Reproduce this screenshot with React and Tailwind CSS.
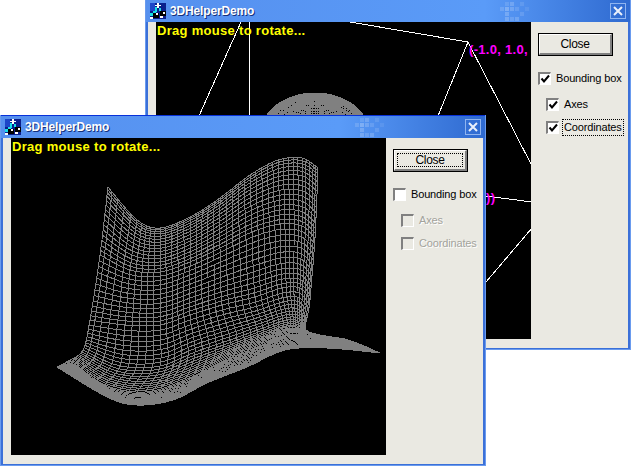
import React from 'react'

const FONT = "font-['Liberation_Sans',Arial,sans-serif]"

// key curves of the surface, top row to the front edge
const KEYS = [
  [[108,187],[137,220],[160,228],[190,217],[220,198],[250,175],[278,160],[302,158],[318,168]],
  [[100,255],[130,270],[160,272],[190,262],[220,248],[252,232],[280,224],[302,226],[315,238]],
  [[90,320],[125,325],[160,325],[190,315],[222,305],[255,297],[282,288],[300,288],[310,300]],
  [[83,350],[120,366],[160,366],[195,352],[230,340],[263,328],[287,320],[300,322],[308,334]],
  [[70,360],[105,385],[145,392],[185,380],[225,360],[262,345],[285,335],[307,335],[345,339]],
  [[57,367],[107,397],[137,405],[173,400],[207,383],[247,367],[285,350],[327,348],[380,353]],
]
const ROWS_PER_KEY = [15, 12, 9, 10, 14]
const COLS = 40

function spline(pts, t) {
  const n = pts.length - 1
  const i = Math.min(Math.floor(t), n - 1)
  const f = t - i
  const p0 = pts[Math.max(i - 1, 0)]
  const p1 = pts[i]
  const p2 = pts[i + 1]
  const p3 = pts[Math.min(i + 2, n)]
  return [0, 1].map((k) =>
    0.5 * (2 * p1[k] + (p2[k] - p0[k]) * f +
      (2 * p0[k] - 5 * p1[k] + 4 * p2[k] - p3[k]) * f * f +
      (3 * p1[k] - p0[k] - 3 * p2[k] + p3[k]) * f * f * f)
  )
}

function surfacePoint(s, t) {
  return spline(KEYS.map((curve) => spline(curve, s)), t)
}

function toPoints(list) {
  return list.map((p) => `${p[0].toFixed(1)},${p[1].toFixed(1)}`).join(' ')
}

function buildSurface() {
  const rowValues = []
  ROWS_PER_KEY.forEach((count, k) => {
    for (let i = 0; i < count; i++) rowValues.push(k + i / count)
  })
  rowValues.push(KEYS.length - 1)
  const lines = []
  rowValues.forEach((t) => {
    const row = []
    for (let c = 0; c <= COLS; c++) row.push(surfacePoint((c / COLS) * 8, t))
    lines.push(toPoints(row))
  })
  for (let c = 0; c <= COLS; c++) {
    const col = []
    rowValues.forEach((t) => col.push(surfacePoint((c / COLS) * 8, t)))
    lines.push(toPoints(col))
  }
  return lines
}

function buildDome() {
  const lines = []
  const cx = 315
  const cy = 135
  for (let i = 1; i < 66; i++) {
    const a = (i / 66) * Math.PI
    const row = []
    const col = []
    for (let j = 0; j <= 40; j++) {
      const b = (j / 40) * Math.PI
      row.push([cx + 55 * Math.sin(a) * Math.cos(b), cy - 42 * Math.cos(a) * (0.5 + 0.5 * Math.sin(b))])
      col.push([cx + 55 * Math.cos(a) * Math.sin(b), cy - 42 * Math.cos(b)])
    }
    lines.push(toPoints(row), toPoints(col))
  }
  return lines
}

const SURFACE = buildSurface()
const DOME = buildDome()

const BOX_LINES = [
  '350,22 468,42',
  '468,42 438,116',
  '468,42 532,166',
  '241,22 199,116',
  '249,22 249,116',
  '486,196 532,202',
  '532,228 486,282',
]

function AppIcon() {
  return (
    <svg width="16" height="16" viewBox="0 0 16 16" shapeRendering="crispEdges" className="shrink-0">
      <rect width="16" height="16" fill="#0a1f8c" />
      <rect x="0" y="0" width="5" height="8" fill="#1d46c8" />
      <rect x="7" y="0" width="2" height="5" fill="#ffffff" />
      <rect x="5" y="2" width="6" height="1" fill="#ffffff" />
      <rect x="5" y="4" width="2" height="5" fill="#19e0e8" />
      <rect x="9" y="5" width="2" height="3" fill="#19e0e8" />
      <rect x="0" y="10" width="3" height="3" fill="#19e0e8" />
      <rect x="3" y="8" width="3" height="2" fill="#19e0e8" />
      <rect x="3" y="10" width="6" height="5" fill="#000000" />
      <rect x="10" y="8" width="6" height="5" fill="#000000" />
      <rect x="6" y="10" width="2" height="2" fill="#ffffff" />
      <rect x="13" y="9" width="2" height="2" fill="#ffffff" />
      <rect x="10" y="13" width="3" height="2" fill="#ffffff" />
      <rect x="0" y="14" width="3" height="2" fill="#ffffff" />
    </svg>
  )
}

const CHECKER = [
  [5, 2, 0.12], [10, 2, 0.18], [20, 2, 0.1],
  [0, 7, 0.14], [5, 7, 0.25], [10, 7, 0.18], [15, 7, 0.12], [25, 7, 0.08],
  [5, 12, 0.2], [20, 12, 0.12],
  [5, 17, 0.2], [10, 17, 0.14], [15, 17, 0.18],
]

function Checker() {
  return (
    <svg width="30" height="22" viewBox="0 0 30 22" shapeRendering="crispEdges" className="shrink-0">
      {CHECKER.map(([x, y, o]) => (
        <rect key={`${x}-${y}`} x={x} y={y} width="4" height="4" fill="#ffffff" opacity={o} />
      ))}
    </svg>
  )
}

function CloseIcon() {
  return (
    <div className="w-4 h-4 shrink-0 border border-[#8fb4f0] flex items-center justify-center">
      <svg width="10" height="10" viewBox="0 0 10 10">
        <path d="M1 1 L9 9 M9 1 L1 9" stroke="#ffffff" strokeWidth="2" opacity="0.9" />
      </svg>
    </div>
  )
}

function TitleBar() {
  return (
    <div className="h-[23px] border-t border-[#0831d9] bg-gradient-to-r from-[#5690ee] via-[#5a9bf8] via-70% to-[#2f6ad0] flex items-center pl-[4px] pr-[4px]">
      <AppIcon />
      <span className="ml-[4px] text-white font-bold text-[12px] tracking-[-0.15px] [text-shadow:1px_1px_0_#14307a]">3DHelperDemo</span>
      <div className="flex-1" />
      <Checker />
      <div className="w-[80px]" />
      <CloseIcon />
    </div>
  )
}

function CloseButton({ focused }) {
  return (
    <div className="w-[75px] h-[23px] border border-black bg-[#eae9e2] flex">
      <div className="flex-1 border-t border-l border-t-white border-l-white border-b-2 border-r-2 border-b-[#808080] border-r-[#808080] p-[2px] flex">
        <div className={`flex-1 flex items-center justify-center text-[12px] tracking-[-0.3px] text-black border border-dotted ${focused ? 'border-black' : 'border-transparent'}`}>
          Close
        </div>
      </div>
    </div>
  )
}

function CheckBox({ label, checked, disabled, focused, indent }) {
  return (
    <div className={`h-[13px] flex items-center ${indent ? 'ml-[8px]' : ''}`}>
      <div className={`w-[13px] h-[13px] shrink-0 border-t-2 border-l-2 border-t-[#808080] border-l-[#808080] border-b border-r border-b-white border-r-white ${disabled ? 'bg-[#eae9e2]' : 'bg-white'}`}>
        {checked && (
          <svg width="10" height="10" viewBox="0 0 10 10" className="block">
            <path d="M1.5 4.5 L4 7.5 L9 1.5" stroke="#000000" strokeWidth="2" fill="none" />
          </svg>
        )}
      </div>
      <span className={`ml-[5px] text-[11px] tracking-[-0.15px] whitespace-nowrap leading-[13px] ${disabled ? 'text-[#a3a39c] [text-shadow:1px_1px_0_#ffffff]' : 'text-black'} ${focused ? 'outline outline-1 outline-dotted outline-black outline-offset-[1px]' : ''}`}>
        {label}
      </span>
    </div>
  )
}

function Window({ className, viewBox, canvas, boxOn }) {
  return (
    <div className={`absolute w-[486px] h-[351px] ${FONT} ${className}`}>
      <div className="h-full flex flex-col border-x border-b border-x-[#6a9bee] border-b-[#6a9bee]">
        <TitleBar />
        <div className="flex-1 flex border-x-2 border-b border-x-[#3b70d8] border-b-[#3b70d8] bg-[#eae9e2] pl-[8px]">
          <div className="relative w-[375px] h-[317px] bg-black overflow-hidden shrink-0">
            <svg className="absolute inset-0" width="375" height="317" viewBox={viewBox} shapeRendering="crispEdges">
              {canvas}
            </svg>
            <div className="absolute left-px top-[2px] text-[#ffff00] font-bold text-[13px] tracking-[0.3px] leading-[14px]">
              Drag mouse to rotate...
            </div>
            {boxOn && (
              <>
                <div className="absolute left-[313px] top-[21px] text-[#ff00ff] font-bold text-[13px] tracking-[0.3px] leading-[14px] whitespace-nowrap">
                  (-1.0, 1.0,
                </div>
                <div className="absolute left-[330px] top-[169px] text-[#ff00ff] font-bold text-[13px] tracking-[0.3px] leading-[14px]">
                  ))
                </div>
              </>
            )}
          </div>
          <div className="pl-[7px] pt-[11px] flex flex-col">
            <CloseButton focused={!boxOn} />
            <div className="mt-[16px]">
              <CheckBox label="Bounding box" checked={boxOn} />
            </div>
            <div className="mt-[13px]">
              <CheckBox label="Axes" indent checked={boxOn} disabled={!boxOn} />
            </div>
            <div className="mt-[10px]">
              <CheckBox label="Coordinates" indent checked={boxOn} disabled={!boxOn} focused={boxOn} />
            </div>
          </div>
        </div>
      </div>
    </div>
  )
}

export default function App() {
  return (
    <div className="relative w-[631px] h-[466px] bg-white overflow-hidden">
      <Window
        className="left-[145px] top-[-1px]"
        viewBox="156 22 375 317"
        boxOn
        canvas={
          <>
            {DOME.map((pts, i) => (
              <polyline key={i} points={pts} fill="none" stroke="#808080" strokeWidth="1" />
            ))}
            {BOX_LINES.map((pts) => (
              <polyline key={pts} points={pts} fill="none" stroke="#ffffff" strokeWidth="1" />
            ))}
          </>
        }
      />
      <Window
        className="left-0 top-[115px]"
        viewBox="11 138 375 317"
        canvas={SURFACE.map((pts, i) => (
          <polyline key={i} points={pts} fill="none" stroke="#808080" strokeWidth="1" />
        ))}
      />
    </div>
  )
}
